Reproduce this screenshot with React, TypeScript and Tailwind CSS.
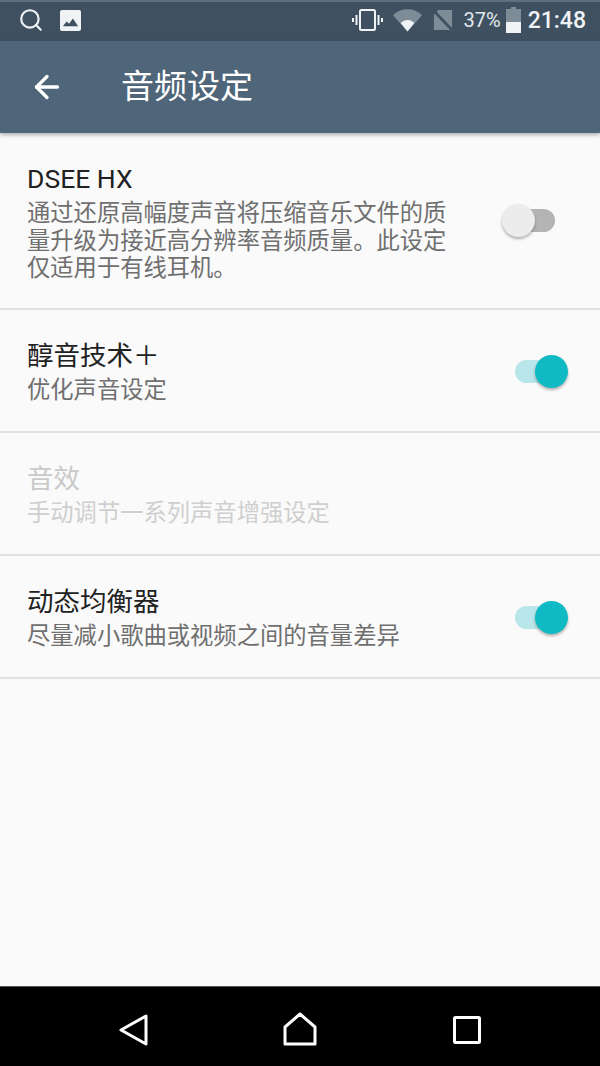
import { ArrowLeft, Search } from 'lucide-react'

const CJK = "font-['Roboto','Noto_Sans_CJK_SC',sans-serif]"

function Toggle({ on }: { on: boolean }) {
  if (on) {
    return (
      <div className="relative h-[23px] w-[53px]">
        <div className="absolute left-0 top-0 h-[23px] w-[40px] rounded-full bg-[#b9e6ea]" />
        <div className="absolute right-0 top-[-5px] h-[33px] w-[33px] rounded-full bg-[#10bac4] shadow-[0_2px_3px_rgba(0,0,0,0.3)]" />
      </div>
    )
  }
  return (
    <div className="relative h-[23px] w-[53px]">
      <div className="absolute right-0 top-0 h-[23px] w-[40px] rounded-full bg-[#b4b4b4]" />
      <div className="absolute left-0 top-[-5px] h-[33px] w-[33px] rounded-full bg-[#ececec] shadow-[0_2px_3px_rgba(0,0,0,0.3)]" />
    </div>
  )
}

interface RowProps {
  title: string
  lines: string[]
  toggle?: boolean
  disabled?: boolean
  height: string
  toggleOffset: string
}

function SettingRow({ title, lines, toggle, disabled, height, toggleOffset }: RowProps) {
  return (
    <div className={`flex ${height} border-b-2 border-[#e2e2e2] pl-[27px]`}>
      <div className="flex-1 pt-[30px]">
        <div className={`mb-[5px] text-[26.5px] leading-[32px] ${disabled ? 'text-[#c9c9c9]' : 'text-[#212121]'}`}>{title}</div>
        {lines.map((line) => (
          <div key={line} className={`text-[23.3px] leading-[27.5px] ${disabled ? 'text-[#cfcfcf]' : 'text-[#6f6f6f]'}`}>
            {line}
          </div>
        ))}
      </div>
      {toggle !== undefined && (
        <div className={toggleOffset}>
          <Toggle on={toggle} />
        </div>
      )}
    </div>
  )
}

export default function App() {
  return (
    <div className={`flex h-[1066px] w-[600px] flex-col overflow-hidden bg-[#fafafa] ${CJK}`}>
      {/* Status bar */}
      <div className="flex h-[41px] items-center justify-between border-t-2 border-[#5d6f7f] bg-[#3f5161] pb-[3px] pl-[18px] pr-[14px]">
        <div className="flex items-center gap-[16px]">
          <Search className="h-[26px] w-[26px] text-[#f0f3f5]" strokeWidth={2} />
          <svg width="21" height="21" viewBox="0 0 22 22">
            <rect width="22" height="22" rx="2" fill="#f0f3f5" />
            <path d="M3 17 L7 12 L9.5 14.5 L13.5 9 L19 17 Z" fill="#3f5161" />
          </svg>
        </div>
        <div className="flex items-center">
          <svg width="31" height="24" viewBox="0 0 31 24" fill="none" stroke="#f0f3f5">
            <rect x="8" y="2" width="15" height="20" rx="1.5" strokeWidth="2" />
            <path d="M4.5 7 V17 M1 10 V14 M26.5 7 V17 M30 10 V14" strokeWidth="2" />
          </svg>
          <svg className="ml-[10px]" width="29" height="24" viewBox="0 0 30 24">
            <path d="M0 7 C8 -1 22 -1 30 7 L15 24 Z" fill="#7e8c98" />
            <path d="M8 15 C12 11 18 11 22 15 L15 24 Z" fill="#f0f3f5" />
          </svg>
          <svg className="ml-[11px]" width="20" height="24" viewBox="0 0 22 24">
            <path d="M6 1 H21 V23 H1 V6 Z" fill="#7e8c98" />
            <path d="M1 2 L21 23" stroke="#3f5161" strokeWidth="3" />
          </svg>
          <span className="ml-[11px] text-[20px] leading-none text-[#e4e8eb]">37%</span>
          <svg className="ml-[5px]" width="15" height="26" viewBox="0 0 15 26">
            <path d="M5 0 H10 V2 H15 V26 H0 V2 H5 Z" fill="#7e8c98" />
            <rect y="15" width="15" height="11" fill="#f0f3f5" />
          </svg>
          <span className="ml-[7px] text-[23px] font-medium leading-none text-[#f0f3f5]">21:48</span>
        </div>
      </div>

      {/* Action bar */}
      <div className="z-10 flex h-[92px] items-center bg-[#4f6579] pl-[29px] shadow-[0_2px_4px_rgba(0,0,0,0.3)]">
        <ArrowLeft className="h-[36px] w-[36px] text-white" strokeWidth={2.2} />
        <span className="ml-[56px] text-[33px] text-white">音频设定</span>
      </div>

      {/* Settings list */}
      <div className="flex-1">
        <SettingRow
          title="DSEE HX"
          lines={['通过还原高幅度声音将压缩音乐文件的质', '量升级为接近高分辨率音频质量。此设定', '仅适用于有线耳机。']}
          toggle={false}
          height="h-[177px]"
          toggleOffset="pt-[76px] pr-[45px]"
        />
        <SettingRow title="醇音技术＋" lines={['优化声音设定']} toggle height="h-[123px]" toggleOffset="pt-[50px] pr-[32px]" />
        <SettingRow title="音效" lines={['手动调节一系列声音增强设定']} disabled height="h-[123px]" toggleOffset="" />
        <SettingRow title="动态均衡器" lines={['尽量减小歌曲或视频之间的音量差异']} toggle height="h-[123px]" toggleOffset="pt-[50px] pr-[32px]" />
      </div>

      {/* Navigation bar */}
      <div className="flex h-[80px] items-center border-t border-[#555] bg-black pt-[6px] pl-[119px] pr-[119px]">
        <div className="flex w-full items-center justify-between">
          <svg width="30" height="32" viewBox="0 0 30 32" fill="none" stroke="white" strokeWidth="3" strokeLinejoin="round">
            <path d="M2 16 L27 2 V30 Z" />
          </svg>
          <svg className="mb-[1px] mr-[2px]" width="34" height="34" viewBox="0 0 34 34" fill="none" stroke="white" strokeWidth="3" strokeLinejoin="round">
            <path d="M2 15 L17 2 L32 15 V32 H2 Z" />
          </svg>
          <svg width="28" height="28" viewBox="0 0 28 28" fill="none" stroke="white" strokeWidth="3" strokeLinejoin="round">
            <rect x="1.5" y="1.5" width="25" height="25" rx="1" />
          </svg>
        </div>
      </div>
    </div>
  )
}
